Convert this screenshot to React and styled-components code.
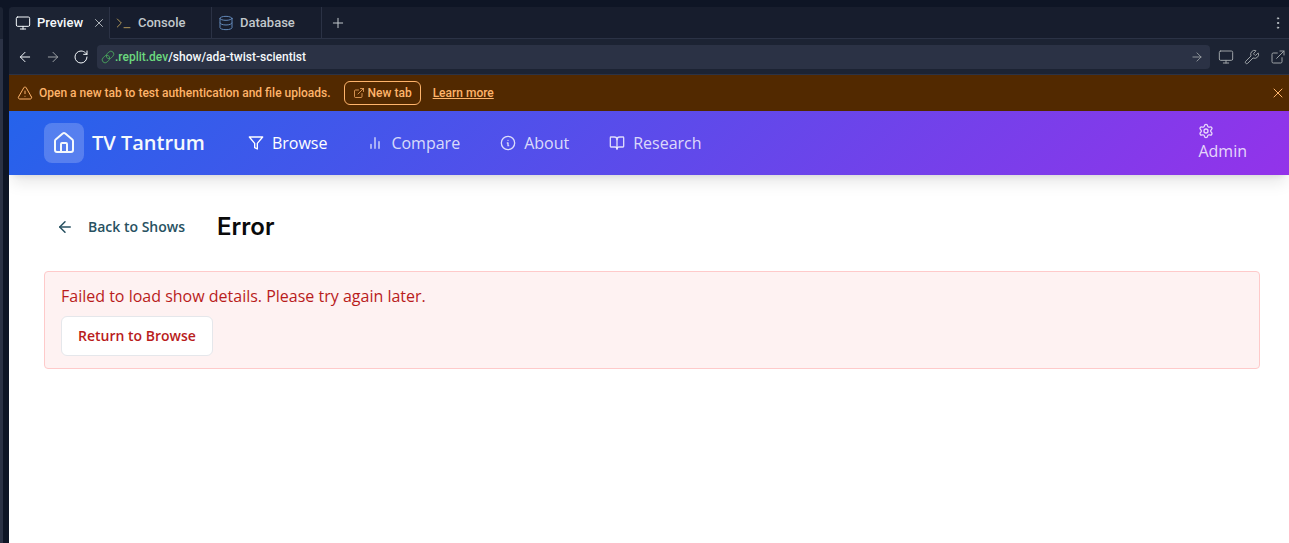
import React from "react";
import styled, { createGlobalStyle } from "styled-components";
import {
  House, BookOpen, ArrowLeft, ArrowRight, Monitor, Wrench, Plus, X,
  EllipsisVertical, TriangleAlert, ExternalLink, RotateCw, Database, Settings,
} from "lucide-react";

const GlobalStyle = createGlobalStyle`
  * { box-sizing: border-box; }
  body { margin: 0; background: #0e1525; }
  button { font: inherit; color: inherit; cursor: pointer; }
  a { color: inherit; text-decoration: none; }
  svg { flex: none; display: block; }
`;

const Workspace = styled.div`
  min-height: 100vh;
  display: flex;
  gap: 6px;
  padding-top: 7px;
  font: 500 13px/18px Roboto, sans-serif;
  color: #f5f9fc;
`;

const SidePane = styled.aside`
  width: 3px;
  background: #2b3245;
  border-top: 32px solid #1c2333;
  border-top-right-radius: 3px;
`;

const Pane = styled.section`
  flex: 1;
  min-width: 0;
  display: flex;
  flex-direction: column;
  background: #1c2333;
  border-top-left-radius: 4px;
  overflow: hidden;
`;

const TabBar = styled.div`
  display: flex;
  height: 32px;
  background: #171d2d;
`;

const TabItem = styled.div`
  display: flex;
  align-items: center;
  width: ${(p) => p.$width}px;
  padding: 0 3px 0 6px;
  border-right: 1px solid #2b3245;
  border-bottom: 1px solid ${(p) => (p.$active ? "#1c2333" : "#2b3245")};
  background: ${(p) => (p.$active ? "#1c2333" : "transparent")};
  color: ${(p) => (p.$active ? "#f5f9fc" : "#c2c8cc")};
`;

const TabButton = styled.button`
  display: flex;
  align-items: center;
  gap: 6px;
  flex: 1;
  padding: 0;
  border: 0;
  background: none;
  white-space: nowrap;
`;

const TabFill = styled.div`
  flex: 1;
  display: flex;
  align-items: center;
  justify-content: space-between;
  padding: 0 3px 0 8px;
  border-bottom: 1px solid #2b3245;
  color: #c2c8cc;
`;

const IconButton = styled.button`
  display: grid;
  place-items: center;
  padding: 0;
  border: 0;
  background: none;
  color: ${(p) => p.$color || "#9da2a6"};
`;

const AddressRow = styled.div`
  display: flex;
  align-items: center;
  height: 36px;
  padding: 0 3px 0 8px;
  gap: 8px;
  border-bottom: 1px solid #2b3245;
  font-size: 12px;
`;

const Controls = styled.div`
  display: flex;
  gap: ${(p) => p.$gap}px;
`;

const Address = styled.div`
  flex: 1;
  display: flex;
  align-items: center;
  height: 24px;
  padding: 0 6px 0 4px;
  border-radius: 4px;
  background: #2b3245;
`;

const Url = styled.span`
  flex: 1;
`;

const Host = styled.span`
  color: #6bd97e;
`;

const Notice = styled.div`
  display: flex;
  align-items: center;
  height: 36px;
  padding: 0 3px 0 8px;
  background: #522900;
  color: #ffb46b;
  font-size: 12px;
`;

const NoticeText = styled.span`
  margin: 0 13px 0 6px;
`;

const NewTabButton = styled.button`
  display: flex;
  align-items: center;
  gap: 3px;
  height: 24px;
  padding: 0 8px;
  border: 1px solid #ffb46b;
  border-radius: 6px;
  background: none;
`;

const LearnMore = styled.a`
  margin: 0 auto 0 12px;
  text-decoration: underline;
`;

const Site = styled.div`
  flex: 1;
  background: #fff;
  font: 400 16px/24px "Open Sans", sans-serif;
`;

const Header = styled.header`
  display: flex;
  align-items: center;
  height: 64px;
  padding: 0 42px 0 35px;
  background: linear-gradient(135deg, #2563eb, #9333ea);
  box-shadow: 0 10px 15px -3px rgba(0, 0, 0, 0.1), 0 4px 6px -4px rgba(0, 0, 0, 0.1);
`;

const Brand = styled.a`
  display: flex;
  align-items: center;
  gap: 8px;
  font-size: 20px;
  line-height: 28px;
  font-weight: 600;
`;

const Logo = styled.span`
  display: grid;
  place-items: center;
  width: 40px;
  height: 40px;
  border-radius: 8px;
  background: rgba(255, 255, 255, 0.2);
`;

const Nav = styled.nav`
  flex: 1;
  display: flex;
  gap: 40px;
  margin-left: 43px;
`;

const NavLink = styled.a`
  display: flex;
  flex-direction: ${(p) => (p.$stacked ? "column" : "row")};
  align-items: ${(p) => (p.$stacked ? "flex-start" : "center")};
  gap: ${(p) => (p.$stacked ? 0 : 8)}px;
  color: ${(p) => (p.$active ? "#fff" : "rgba(255, 255, 255, 0.8)")};
`;

const Main = styled.main`
  padding: 32px 29px 32px 35px;
`;

const TitleRow = styled.div`
  display: flex;
  align-items: center;
  gap: 16px;
  margin-bottom: 24px;
`;

const BackButton = styled.button`
  display: flex;
  align-items: center;
  gap: 14px;
  height: 40px;
  padding: 0 16px 0 12px;
  border: 0;
  background: none;
  color: #285161;
  font-size: 14px;
  font-weight: 600;
`;

const Title = styled.h1`
  margin: 0;
  color: #0a0a0a;
  font: 600 24px/32px Inter, sans-serif;
`;

const Alert = styled.div`
  padding: 12px 16px;
  border: 1px solid #fecaca;
  border-radius: 4px;
  background: #fef2f2;
  color: #b91c1c;
`;

const Message = styled.p`
  margin: 0 0 8px;
`;

const ReturnButton = styled.button`
  height: 40px;
  padding: 0 16px;
  border: 1px solid #e5e7eb;
  border-radius: 6px;
  background: #fff;
  font-size: 14px;
  font-weight: 600;
`;

const Glyph = ({ size = 16, children, color = "currentColor", width = 2 }) => (
  <svg width={size} height={size} viewBox="0 0 24 24" fill="none" stroke={color}
    strokeWidth={width} strokeLinecap="round" strokeLinejoin="round" aria-hidden="true">
    {children}
  </svg>
);

export default function App() {
  return (
    <>
      <GlobalStyle />
      <Workspace>
        <SidePane />
        <Pane>
          <TabBar>
            <TabItem $active $width={101}>
              <TabButton><Monitor size={16} strokeWidth={1.5} />Preview</TabButton>
              <IconButton $color="#c2c8cc" aria-label="Close tab"><X size={14} strokeWidth={1.5} /></IconButton>
            </TabItem>
            <TabItem $width={102}>
              <TabButton>
                <Glyph color="#b0975a" width={1.5}><path d="M2 6l6 6-6 6M12 19h9" /></Glyph>Console
              </TabButton>
            </TabItem>
            <TabItem $width={110}>
              <TabButton><Database size={16} strokeWidth={1.5} color="#6288b8" />Database</TabButton>
            </TabItem>
            <TabFill>
              <IconButton $color="#c2c8cc" aria-label="Add tab"><Plus size={16} strokeWidth={1.5} /></IconButton>
              <IconButton $color="#c2c8cc" aria-label="Pane menu"><EllipsisVertical size={16} strokeWidth={1.5} /></IconButton>
            </TabFill>
          </TabBar>
          <AddressRow>
            <Controls $gap={12}>
              <IconButton $color="#f5f9fc" aria-label="Back"><ArrowLeft size={16} strokeWidth={1.5} /></IconButton>
              <IconButton aria-label="Forward"><ArrowRight size={16} strokeWidth={1.5} /></IconButton>
              <IconButton $color="#f5f9fc" aria-label="Reload"><RotateCw size={16} strokeWidth={1.5} /></IconButton>
            </Controls>
            <Address>
              <Glyph size={14} color="#4ca85e" width={1.5}>
                <path d="M10 13a5 5 0 0 0 7.54.54l3-3a5 5 0 0 0-7.07-7.07l-3 3a5 5 0 0 0-.9 5.8" />
                <path d="M14 11a5 5 0 0 0-7.54-.54l-3 3a5 5 0 0 0 7.07 7.07l3-3a5 5 0 0 0 .9-5.8" />
              </Glyph>
              <Url><Host>.replit.dev</Host>/show/ada-twist-scientist</Url>
              <IconButton aria-label="Go"><ArrowRight size={14} strokeWidth={1.5} /></IconButton>
            </Address>
            <Controls $gap={10}>
              <IconButton aria-label="Device"><Monitor size={16} strokeWidth={1.5} /></IconButton>
              <IconButton aria-label="Tools"><Wrench size={16} strokeWidth={1.5} /></IconButton>
              <IconButton aria-label="Open in new tab"><ExternalLink size={16} strokeWidth={1.5} /></IconButton>
            </Controls>
          </AddressRow>
          <Notice>
            <TriangleAlert size={16} strokeWidth={1.5} />
            <NoticeText>Open a new tab to test authentication and file uploads.</NoticeText>
            <NewTabButton><ExternalLink size={12} strokeWidth={1.5} />New tab</NewTabButton>
            <LearnMore href="#learn">Learn more</LearnMore>
            <IconButton $color="#ffb46b" aria-label="Dismiss"><X size={16} strokeWidth={1.5} /></IconButton>
          </Notice>
          <Site>
            <Header>
              <Brand href="#home"><Logo><House size={24} /></Logo>TV Tantrum</Brand>
              <Nav>
                <NavLink $active href="#browse">
                  <Glyph><path d="M22 3H2l8 9.46V19l4 2v-8.54z" /></Glyph>Browse
                </NavLink>
                <NavLink href="#compare">
                  <Glyph><path d="M18 20V10M12 20V4M6 20v-6" /></Glyph>Compare
                </NavLink>
                <NavLink href="#about">
                  <Glyph><circle cx="12" cy="12" r="10" /><path d="M11 12h1v4h1M12 8h.01" /></Glyph>About
                </NavLink>
                <NavLink href="#research"><BookOpen size={16} />Research</NavLink>
              </Nav>
              <NavLink $stacked href="#admin"><Settings size={16} />Admin</NavLink>
            </Header>
            <Main>
              <TitleRow>
                <BackButton><ArrowLeft size={18} />Back to Shows</BackButton>
                <Title>Error</Title>
              </TitleRow>
              <Alert role="alert">
                <Message>Failed to load show details. Please try again later.</Message>
                <ReturnButton>Return to Browse</ReturnButton>
              </Alert>
            </Main>
          </Site>
        </Pane>
      </Workspace>
    </>
  );
}
